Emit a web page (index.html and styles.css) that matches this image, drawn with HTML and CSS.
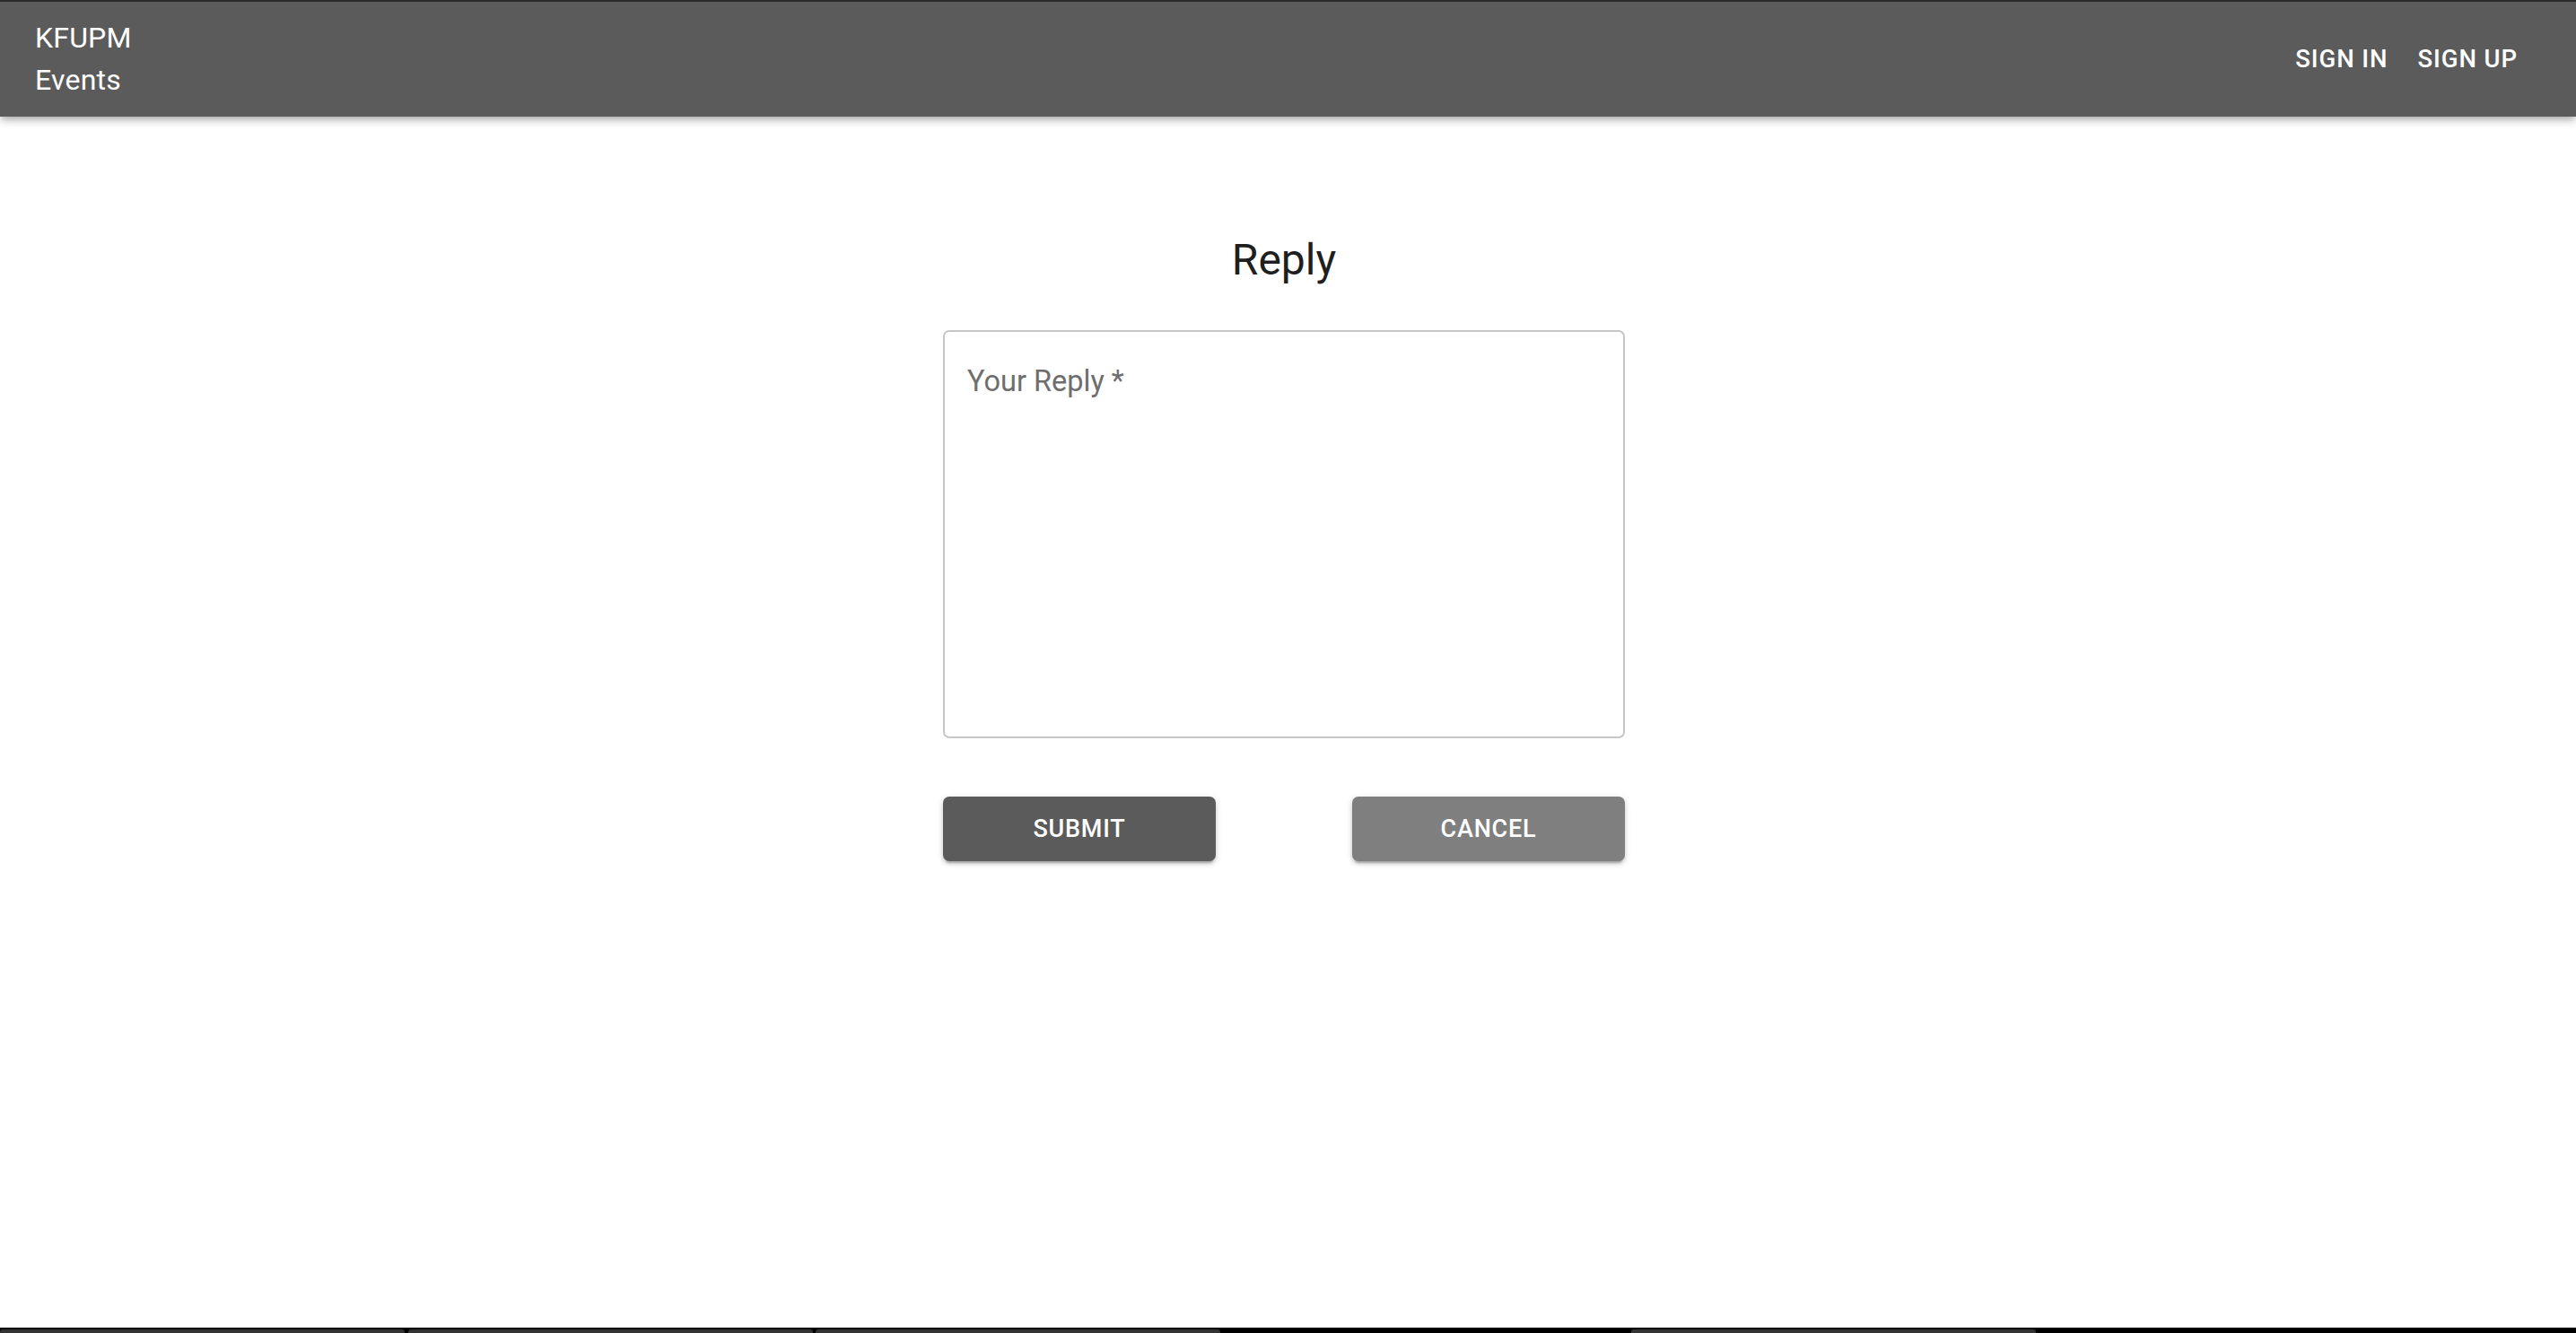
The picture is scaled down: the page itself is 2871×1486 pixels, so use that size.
FILE: index.html
```html
<!DOCTYPE html>
<html lang="en">
<head>
<meta charset="utf-8">
<title>KFUPM Events - Reply</title>
<link rel="stylesheet" href="styles.css">
</head>
<body>
<header class="appbar">
  <div class="brand">KFUPM<br>Events</div>
  <nav class="nav">
    <a class="nav-btn" href="#">SIGN IN</a>
    <a class="nav-btn" href="#">SIGN UP</a>
  </nav>
</header>
<main class="main">
  <form class="reply-form">
    <h1 class="title">Reply</h1>
    <textarea class="reply-input" placeholder="Your Reply *"></textarea>
    <div class="actions">
      <button type="button" class="btn btn-submit">SUBMIT</button>
      <button type="button" class="btn btn-cancel">CANCEL</button>
    </div>
  </form>
</main>
<footer class="taskbar">
  <span class="tab"></span>
  <span class="tab"></span>
  <span class="tab"></span>
  <span class="tab tab-empty"></span>
  <span class="tab"></span>
</footer>
</body>
</html>
```
FILE: styles.css
```css
* { box-sizing: border-box; }
html, body { margin: 0; padding: 0; }
body {
  font-family: Roboto, "Liberation Sans", Arial, sans-serif;
  background: #ffffff;
  min-height: 100vh;
  display: flex;
  flex-direction: column;
  overflow: hidden;
}
.appbar {
  position: relative;
  z-index: 2;
  height: 130px;
  background: #5b5b5b;
  border-top: 2px solid #2b2b2b;
  display: flex;
  align-items: center;
  justify-content: space-between;
  padding: 0 66px 0 39px;
  box-shadow: 0 3px 6px -2px rgba(0,0,0,0.22), 0 6px 8px 0 rgba(0,0,0,0.12), 0 2px 14px 0 rgba(0,0,0,0.10);
  color: #ffffff;
}
.brand {
  font-size: 32px;
  line-height: 47px;
  font-weight: 400;
  letter-spacing: 0.2px;
}
.nav { display: flex; align-items: center; gap: 34px; }
.nav-btn {
  color: #ffffff;
  text-decoration: none;
  font-size: 27.5px;
  font-weight: 500;
  letter-spacing: 0.9px;
  margin-right: -0.9px;
  line-height: 40px;
}
.main {
  flex: 1;
  display: flex;
  justify-content: center;
  padding-right: 9px;
}
.reply-form {
  width: 760px;
  padding-top: 128px;
  display: flex;
  flex-direction: column;
  align-items: stretch;
}
.title {
  margin: 0;
  text-align: center;
  font-size: 48px;
  line-height: 64px;
  font-weight: 400;
  color: #1f1f1f;
}
.reply-input {
  margin-top: 46px;
  width: 760px;
  height: 455px;
  border: 2px solid #c6c6c6;
  border-radius: 7px;
  padding: 33px 25px;
  font-family: inherit;
  font-size: 32.5px;
  line-height: 44px;
  color: #222;
  resize: none;
  outline: none;
  background: #fff;
}
.reply-input::placeholder { color: #6e6e6e; opacity: 1; }
.actions {
  margin-top: 65px;
  display: flex;
  justify-content: space-between;
}
.btn {
  width: 304px;
  height: 72px;
  border: none;
  border-radius: 7px;
  color: #ffffff;
  font-family: inherit;
  font-size: 27px;
  font-weight: 500;
  letter-spacing: 0.8px;
  cursor: pointer;
  box-shadow: 0 5px 2px -3px rgba(0,0,0,0.2), 0 3px 4px 0 rgba(0,0,0,0.14), 0 2px 9px 0 rgba(0,0,0,0.12);
}
.btn-submit { background: #5b5b5b; }
.btn-cancel { background: #7f7f7f; }
.taskbar {
  height: 6px;
  background: #000000;
  display: flex;
  align-items: flex-end;
  gap: 3.5px;
}
.tab {
  width: 451px;
  height: 4px;
  background: #333333;
  border-radius: 3px 3px 0 0;
}
.tab-empty { visibility: hidden; }
```
